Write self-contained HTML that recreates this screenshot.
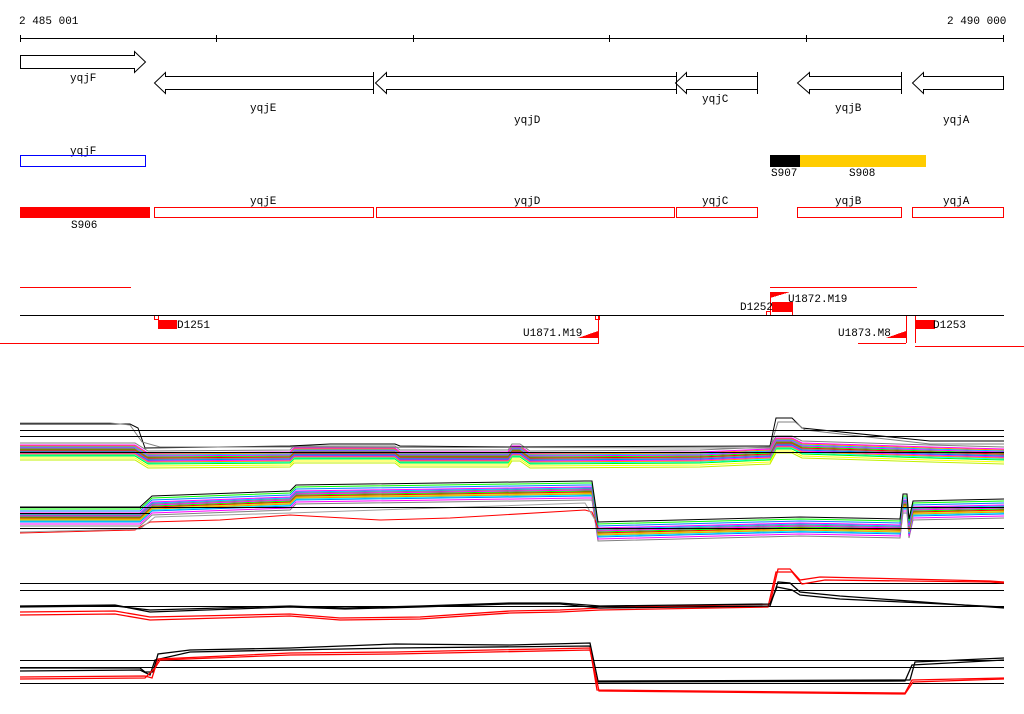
<!DOCTYPE html>
<html><head><meta charset="utf-8"><style>
html,body{margin:0;padding:0;background:#fff;}
svg{display:block}
text{font-family:"Liberation Mono","DejaVu Sans Mono",monospace;font-size:11px;fill:#000}
</style></head><body>
<svg width="1024" height="714" viewBox="0 0 1024 714" xmlns="http://www.w3.org/2000/svg" shape-rendering="crispEdges">
<defs>
<polyline id="t1" fill="none" points="20,448 135,448 148,456 290,455 294,451 395,451 400,455 508,455 512,449 520,449 530,456 700,455 770,452 776,441 792,441 802,446 930,450 1004,452"/>
<polyline id="t2" fill="none" points="20,516 140,516 152,505 290,500 296,494 585,490 592,490 598,531 800,526 900,528 903,503 907,503 909,528 913,510 1004,508"/>
</defs>
<!-- ruler -->
<text x="19" y="24">2 485 001</text>
<text x="947" y="24">2 490 000</text>
<g stroke="#000" stroke-width="1">
<line x1="20" y1="38.5" x2="1004" y2="38.5"/>
<line x1="20.5" y1="35" x2="20.5" y2="42"/><line x1="216.5" y1="35" x2="216.5" y2="42"/>
<line x1="413.5" y1="35" x2="413.5" y2="42"/><line x1="609.5" y1="35" x2="609.5" y2="42"/>
<line x1="806.5" y1="35" x2="806.5" y2="42"/><line x1="1003.5" y1="35" x2="1003.5" y2="42"/>
</g>
<!-- gene arrows -->
<g fill="#fff" stroke="#000" stroke-width="1" shape-rendering="auto">
<polygon points="20.5,55.5 134.5,55.5 134.5,51.5 145.5,62 134.5,72.5 134.5,68.5 20.5,68.5"/>
<polygon points="154.5,83 165.5,72.5 165.5,76.5 373.5,76.5 373.5,89.5 165.5,89.5 165.5,93.5"/>
<polygon points="375.5,83 386.5,72.5 386.5,76.5 676.5,76.5 676.5,89.5 386.5,89.5 386.5,93.5"/>
<polygon points="675.5,83 686.5,72.5 686.5,76.5 757.5,76.5 757.5,89.5 686.5,89.5 686.5,93.5"/>
<polygon points="797.5,83 809.5,72.5 809.5,76.5 901.5,76.5 901.5,89.5 809.5,89.5 809.5,93.5"/>
<polygon points="912.5,83 923.5,72.5 923.5,76.5 1003.5,76.5 1003.5,89.5 923.5,89.5 923.5,93.5"/>
<line x1="373.5" y1="72" x2="373.5" y2="94"/><line x1="676.5" y1="72" x2="676.5" y2="94"/>
<line x1="757.5" y1="72" x2="757.5" y2="94"/><line x1="901.5" y1="72" x2="901.5" y2="94"/>
</g>
<text x="70" y="81">yqjF</text><text x="250" y="111">yqjE</text><text x="514" y="123">yqjD</text>
<text x="702" y="102">yqjC</text><text x="835" y="111">yqjB</text><text x="943" y="123">yqjA</text>
<!-- blue / S907 / S908 -->
<text x="70" y="154">yqjF</text>
<rect x="20.5" y="155.5" width="125" height="11" fill="none" stroke="#0000ff"/>
<rect x="770" y="155" width="30" height="12" fill="#000"/>
<rect x="800" y="155" width="126" height="12" fill="#ffcc00"/>
<text x="771" y="176">S907</text><text x="849" y="176">S908</text>
<!-- red CDS row -->
<rect x="20" y="207" width="130" height="11" fill="#ff0000"/>
<g fill="none" stroke="#ff0000">
<rect x="154.5" y="207.5" width="219" height="10"/>
<rect x="376.5" y="207.5" width="298" height="10"/>
<rect x="676.5" y="207.5" width="81" height="10"/>
<rect x="797.5" y="207.5" width="104" height="10"/>
<rect x="912.5" y="207.5" width="91" height="10"/>
</g>
<text x="71" y="228">S906</text>
<text x="250" y="204">yqjE</text><text x="514" y="204">yqjD</text><text x="702" y="204">yqjC</text>
<text x="835" y="204">yqjB</text><text x="943" y="204">yqjA</text>
<!-- features -->
<g stroke="#ff0000" fill="none">
<line x1="20" y1="287.5" x2="131" y2="287.5"/>
<line x1="770" y1="287.5" x2="917" y2="287.5"/>
<line x1="0" y1="343.5" x2="599" y2="343.5"/>
<line x1="858" y1="343.5" x2="906" y2="343.5"/>
<line x1="915" y1="346.5" x2="1024" y2="346.5"/>
<rect x="154.5" y="315.5" width="4" height="4"/>
<rect x="595.5" y="315.5" width="4" height="4"/>
<rect x="766.5" y="311.5" width="4" height="4"/>
<line x1="598.5" y1="316" x2="598.5" y2="343"/>
<line x1="770.5" y1="292" x2="770.5" y2="315"/>
<line x1="792.5" y1="302" x2="792.5" y2="315"/>
<line x1="906.5" y1="316" x2="906.5" y2="343"/>
<line x1="915.5" y1="316" x2="915.5" y2="343"/>
</g>
<line x1="20" y1="315.5" x2="1004" y2="315.5" stroke="#000"/>
<g fill="#ff0000">
<rect x="158" y="320" width="19" height="9"/>
<rect x="772" y="302" width="20" height="10"/>
<rect x="915" y="320" width="20" height="9"/>
<polygon points="578,338 598,331 598,338"/>
<polygon points="886,338 906,331 906,338"/>
<polygon points="770,292 790,292 770,298"/>
</g>
<text x="177" y="328">D1251</text>
<text x="523" y="336">U1871.M19</text>
<text x="740" y="310">D1252</text>
<text x="788" y="302">U1872.M19</text>
<text x="838" y="336">U1873.M8</text>
<text x="933" y="328">D1253</text>
<!-- plot 1 -->
<g shape-rendering="auto" stroke-width="1">
<use href="#t1" stroke="#c0f000" transform="translate(0,12)"/>
<use href="#t1" stroke="#ffff00" transform="translate(0,10)"/>
<use href="#t1" stroke="#00ff00" transform="translate(0,8)"/>
<use href="#t1" stroke="#00ffff" transform="translate(0,7)"/>
<use href="#t1" stroke="#ff8c00" transform="translate(0,6)"/>
<use href="#t1" stroke="#ff00ff" transform="translate(0,5)"/>
<use href="#t1" stroke="#0080ff" transform="translate(0,4)"/>
<use href="#t1" stroke="#808080" transform="translate(0,3)"/>
<use href="#t1" stroke="#ff0000" transform="translate(0,2)"/>
<use href="#t1" stroke="#00ff00" transform="translate(0,1)"/>
<use href="#t1" stroke="#ff00ff" transform="translate(0,0)"/>
<use href="#t1" stroke="#00c0ff" transform="translate(0,-1)"/>
<use href="#t1" stroke="#ff8c00" transform="translate(0,-2)"/>
<use href="#t1" stroke="#ff00ff" transform="translate(0,-3)"/>
<use href="#t1" stroke="#808080" transform="translate(0,-5)"/>
<polyline fill="none" stroke="#000" points="20,424 130,424 138,428 145,448 290,446 330,444 395,444 400,446 510,447 770,446 776,418 792,418 802,428 930,441 1004,441"/>
<polyline fill="none" stroke="#808080" points="20,423 110,423 130,425 142,442 160,447 290,447 770,448 778,422 795,422 805,430 930,444 1004,444"/>
</g>
<g stroke="#000"><line x1="20" y1="430.5" x2="1004" y2="430.5"/><line x1="20" y1="436.5" x2="1004" y2="436.5"/><line x1="20" y1="452.5" x2="1004" y2="452.5"/></g>
<!-- plot 2 -->
<g shape-rendering="auto">
<use href="#t2" stroke="#808080" transform="translate(0,10)"/>
<use href="#t2" stroke="#ff00ff" transform="translate(0,8)"/>
<use href="#t2" stroke="#0080ff" transform="translate(0,6)"/>
<use href="#t2" stroke="#00ffff" transform="translate(0,5)"/>
<use href="#t2" stroke="#ff8c00" transform="translate(0,4)"/>
<use href="#t2" stroke="#c0f000" transform="translate(0,3)"/>
<use href="#t2" stroke="#ff0000" transform="translate(0,2)"/>
<use href="#t2" stroke="#00ff00" transform="translate(0,1)"/>
<use href="#t2" stroke="#ff00ff" transform="translate(0,0)"/>
<use href="#t2" stroke="#808080" transform="translate(0,-1)"/>
<use href="#t2" stroke="#00c0ff" transform="translate(0,-2)"/>
<use href="#t2" stroke="#ff00ff" transform="translate(0,-3)"/>
<use href="#t2" stroke="#0080ff" transform="translate(0,-5)"/>
<use href="#t2" stroke="#00ff00" transform="translate(0,-7)"/>
<use href="#t2" stroke="#000" transform="translate(0,-9)"/>
<polyline fill="none" stroke="#ff0000" points="20,533 135,530 150,522 220,520 290,515 380,520 450,518 585,510 592,512 598,528"/>
<polyline fill="none" stroke="#a0a0a0" points="20,532 140,529 155,517 290,513 585,503 595,520"/>
</g>
<g stroke="#000"><line x1="20" y1="507.5" x2="1004" y2="507.5"/><line x1="20" y1="513.5" x2="150" y2="513.5"/><line x1="20" y1="528.5" x2="1004" y2="528.5"/></g>
<!-- plot 3 -->
<g stroke="#000"><line x1="20" y1="583.5" x2="1004" y2="583.5"/><line x1="20" y1="590.5" x2="1004" y2="590.5"/><line x1="20" y1="606.5" x2="1004" y2="606.5"/></g>
<g fill="none" shape-rendering="auto" stroke-width="1.3">
<polyline stroke="#ff0000" points="20,612 115,611 150,617 290,614 340,618 420,617 510,611 560,610 600,608 770,604 778,569 790,569 800,580 820,577 990,581 1004,582"/>
<polyline stroke="#ff0000" points="20,615 115,614 150,620 290,616 340,620 420,619 510,613 560,612 600,610 768,607 776,572 792,572 802,584 825,580 990,582 1004,583"/>
<polyline stroke="#000" points="20,606 115,605 150,612 290,607 345,609 420,607 510,604 560,604 600,608 770,606 778,582 790,583 800,592 840,596 1004,608"/>
<polyline stroke="#000" points="20,607 115,606 150,610 290,606 345,608 420,606 510,603 560,603 600,606 770,604 777,587 792,590 800,595 840,599 1004,607"/>
</g>
<!-- plot 4 -->
<g stroke="#000"><line x1="20" y1="660.5" x2="1004" y2="660.5"/><line x1="20" y1="667.5" x2="1004" y2="667.5"/><line x1="20" y1="683.5" x2="1004" y2="683.5"/></g>
<g fill="none" shape-rendering="auto" stroke-width="1.3">
<polyline stroke="#000" points="20,668 140,668 145,672 153,672 158,654 190,650 290,648 395,644 510,645 590,643 598,681 910,680 915,662 1004,658"/>
<polyline stroke="#000" points="20,671 140,670 150,675 155,660 190,652 290,650 395,648 590,646 596,682 905,681 912,665 1004,660"/>
<polyline stroke="#ff0000" points="20,677 145,676 152,678 158,659 290,653 395,652 590,648 597,690 905,693 912,680 1004,678"/>
<polyline stroke="#ff0000" points="20,679 145,678 155,668 160,660 290,655 395,654 590,650 599,691 905,694 913,682 1004,679"/>
</g>
</svg>
</body></html>
